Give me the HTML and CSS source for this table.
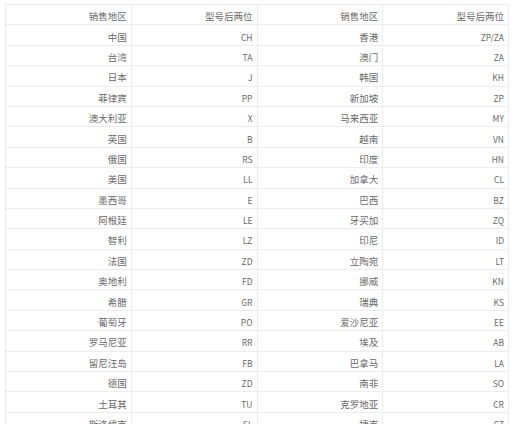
FILE: index.html
```html
<!DOCTYPE html>
<html lang="zh">
<head>
<meta charset="utf-8">
<link rel="stylesheet" href="styles.css">
</head>
<body>
<table class="codes">
<tr><td>销售地区</td><td>型号后两位</td><td>销售地区</td><td>型号后两位</td></tr>
<tr><td>中国</td><td>CH</td><td>香港</td><td>ZP/ZA</td></tr>
<tr><td>台湾</td><td>TA</td><td>澳门</td><td>ZA</td></tr>
<tr><td>日本</td><td>J</td><td>韩国</td><td>KH</td></tr>
<tr><td>菲律宾</td><td>PP</td><td>新加坡</td><td>ZP</td></tr>
<tr><td>澳大利亚</td><td>X</td><td>马来西亚</td><td>MY</td></tr>
<tr><td>英国</td><td>B</td><td>越南</td><td>VN</td></tr>
<tr><td>俄国</td><td>RS</td><td>印度</td><td>HN</td></tr>
<tr><td>美国</td><td>LL</td><td>加拿大</td><td>CL</td></tr>
<tr><td>墨西哥</td><td>E</td><td>巴西</td><td>BZ</td></tr>
<tr><td>阿根廷</td><td>LE</td><td>牙买加</td><td>ZQ</td></tr>
<tr><td>智利</td><td>LZ</td><td>印尼</td><td>ID</td></tr>
<tr><td>法国</td><td>ZD</td><td>立陶宛</td><td>LT</td></tr>
<tr><td>奥地利</td><td>FD</td><td>挪威</td><td>KN</td></tr>
<tr><td>希腊</td><td>GR</td><td>瑞典</td><td>KS</td></tr>
<tr><td>葡萄牙</td><td>PO</td><td>爱沙尼亚</td><td>EE</td></tr>
<tr><td>罗马尼亚</td><td>RR</td><td>埃及</td><td>AB</td></tr>
<tr><td>留尼汪岛</td><td>FB</td><td>巴拿马</td><td>LA</td></tr>
<tr><td>德国</td><td>ZD</td><td>南非</td><td>SO</td></tr>
<tr><td>土耳其</td><td>TU</td><td>克罗地亚</td><td>CR</td></tr>
<tr><td>斯洛伐克</td><td>SL</td><td>捷克</td><td>CZ</td></tr>
</table>
</body>
</html>
```
FILE: styles.css
```css
html, body {
  margin: 0;
  padding: 0;
  background: #ffffff;
}
body {
  padding: 4px 0 0 5px;
  overflow: hidden;
}
.codes {
  border-collapse: collapse;
  table-layout: fixed;
  width: 504px;
  font-family: "Noto Sans CJK SC", "Noto Sans", sans-serif;
  font-size: 9.5px;
  color: #6a6a6a;
}
.codes td {
  border: 1px solid #ededed;
  height: 16.4px;
  padding: 3px 4px 0 0;
  text-align: right;
  line-height: 12px;
}
.codes tr + tr td:nth-child(even) {
  font-size: 8.5px;
}
```
